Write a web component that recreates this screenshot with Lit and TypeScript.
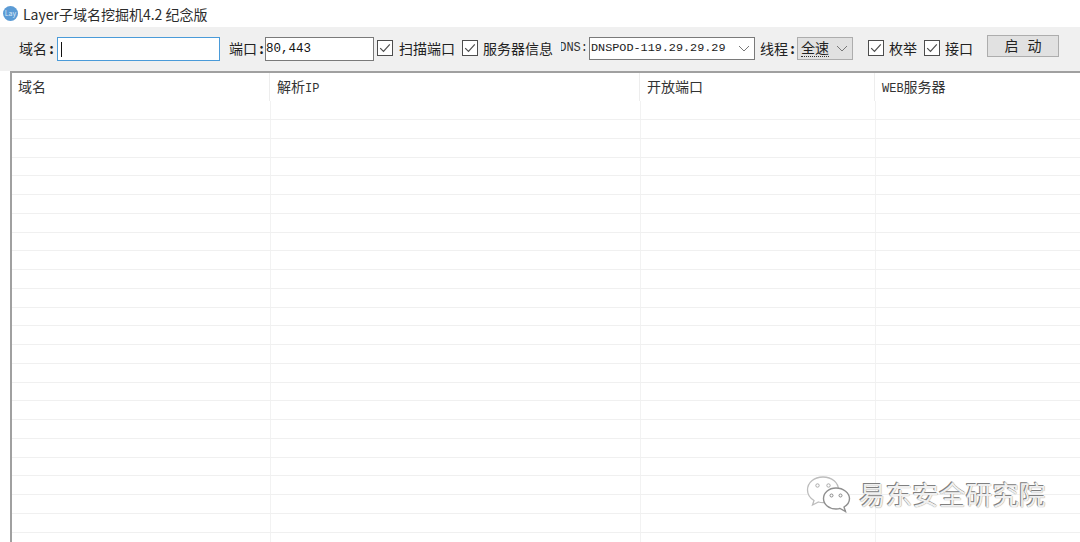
import { LitElement, html, css, svg } from "lit";
import { customElement } from "lit/decorators.js";

const check = html`<svg class="cb" width="16" height="16" viewBox="0 0 16 16">
  <rect x="0.5" y="0.5" width="15" height="15" fill="#fff" stroke="#4d4d4d"></rect>
  <path d="M3.2 8.2 L6.5 11.5 L12.8 4.4" fill="none" stroke="#4d4d4d" stroke-width="1.2"></path>
</svg>`;

const chev = html`<svg class="chev" width="12" height="7" viewBox="0 0 12 7"><path d="M1 1 L6 6 L11 1" fill="none" stroke="#777" stroke-width="1"></path></svg>`;

const bubble = svg`
  <path d="M17 2 C8 2 1.5 7.5 1.5 15 C1.5 19.5 4 23 8 25.5 L6.5 30 L12.5 27 C14 27.5 15.5 27.7 17 27.7 C27 27.7 32.5 22 32.5 15 C32.5 7.5 26 2 17 2 Z" fill="#fff" stroke="#bdbdbd" stroke-width="1.3"></path>
  <circle cx="11.5" cy="10.5" r="1.7" fill="#fff" stroke="#aaa"></circle>
  <circle cx="22.5" cy="10.5" r="1.7" fill="#fff" stroke="#aaa"></circle>
  <path d="M30 13 C22.5 13 17.5 18 17.5 23.5 C17.5 29.5 23 34 30 34 C31.5 34 33 33.8 34 33.4 L39.5 36.5 L38 32 C41.5 30 43.5 27 43.5 23.5 C43.5 18 37.5 13 30 13 Z" fill="#fff" stroke="#8f8f8f" stroke-width="1.4"></path>
  <circle cx="25.5" cy="20.5" r="1.5" fill="#fff" stroke="#888"></circle>
  <circle cx="34.5" cy="20.5" r="1.5" fill="#fff" stroke="#888"></circle>
`;

const colon = html`<span class="colon">:</span>`;

@customElement("app-root")
export class AppRoot extends LitElement {
  static styles = css`
    :host { display: block; width: 1080px; height: 542px; overflow: hidden; background: #fff; position: relative; font-family: "Noto Sans CJK SC", "Noto Sans", sans-serif; }
    .title { height: 27px; display: flex; align-items: center; background: #fff; padding-left: 3px; box-sizing: border-box; gap: 5px; font-size: 14px; color: #2b2b2b; }
    .logo { width: 15px; height: 15px; border-radius: 50%; background: #5b9bd5; color: #dbe8f5; font-size: 7px; line-height: 15px; text-align: center; flex: none; }
    .toolbar { height: 44px; background: #f0f0f0; display: flex; align-items: center; box-sizing: border-box; font-size: 14px; color: #222; }
    .toolbar > * { flex: none; }
    .lbl { white-space: nowrap; line-height: 20px; display: flex; margin-top: -3px; }
    .colon { width: 9px; text-align: center; font-weight: 700; }
    .input { height: 24px; box-sizing: border-box; background: #fff; display: flex; align-items: center; padding-left: 0; font-family: "Liberation Mono", monospace; font-size: 12.5px; color: #111; }
    .domain { width: 163px; border: 1.5px solid #4a9bd9; margin-left: 1px; }
    .caret { width: 1px; height: 15px; background: #111; margin-left: 3px; }
    .port { width: 109px; border: 1px solid #7a7a7a; margin-left: -1px; }
    .sel { height: 23px; box-sizing: border-box; display: flex; align-items: center; justify-content: space-between; padding: 0 4px 0 1px; margin-top: -2px; }
    .dns { width: 166px; background: #fff; border: 1px solid #7a7a7a; font-family: "Liberation Mono", monospace; font-size: 11.8px; white-space: nowrap; overflow: hidden; margin-left: 1px; }
    .speed { width: 56px; background: #e1e1e1; border: 1px solid #adadad; font-size: 14px; padding-left: 3px; }
    .speed span { line-height: 17px; border-bottom: 1px dotted #333; }
    .dnslbl { display: flex; justify-content: flex-end; width: 27px; overflow: hidden; white-space: nowrap; margin-left: 8px; margin-top: -3px; font-family: "Liberation Mono", monospace; font-size: 12px; color: #333; line-height: 20px; }
    .cb { flex: none; margin-top: -3px; }
    .ck { display: flex; }
    .btn { width: 72px; height: 22px; margin-left: 14px; margin-top: -6px; background: #e1e1e1; border: 1px solid #adadad; box-sizing: border-box; text-align: center; line-height: 19px; font-size: 14px; word-spacing: 6px; color: #222; }
    .chev { flex: none; }
    .table { margin-left: 10px; border-top: 2px solid #a0a0a0; border-left: 2px solid #a0a0a0; height: 471px; overflow: hidden; position: relative; box-sizing: border-box; }
    .row { display: grid; box-sizing: border-box; }
    .head { grid-template-columns: 257px 370px 235px 1fr; height: 28px; font-size: 14px; color: #333; }
    .head > div { padding: 2px 0 0 7px; line-height: 22px; border-left: 1px solid #ededed; box-sizing: border-box; }
    .head > div:first-child { border-left: 0; padding-left: 6px; }
    .m { font-family: "Liberation Mono", monospace; font-size: 12px; }
    .body { grid-template-columns: 258px 370px 235px 1fr; height: 18.75px; border-bottom: 1px solid #f0f0f0; }
    .first { height: 19px; }
    .body > div { border-left: 1px solid #f2f2f2; }
    .body > div:first-child { border-left: 0; }
    .wm { position: absolute; left: 806px; top: 474px; display: flex; align-items: center; gap: 8px; pointer-events: none; }
    .wmt { font-size: 26.7px; line-height: 40px; color: #f0f0f0; text-shadow: -1px -1px 0 #808080, 0 0 1px #777; white-space: nowrap; }
  `;

  render() {
    const rows = Array.from({ length: 23 });
    return html`
      <div class="title"><div class="logo">Lay</div><span>Layer子域名挖掘机4.2 纪念版</span></div>
      <div class="toolbar">
        <span class="lbl" style="margin-left:19px">域名${colon}</span>
        <div class="input domain"><div class="caret"></div></div>
        <span class="lbl" style="margin-left:9px">端口${colon}</span>
        <div class="input port">80,443</div>
        <span class="ck" style="margin-left:3px">${check}</span>
        <span class="lbl" style="margin-left:6px">扫描端口</span>
        <span class="ck" style="margin-left:7px">${check}</span>
        <span class="lbl" style="margin-left:5px">服务器信息</span>
        <span class="dnslbl"><span>DNS:</span></span>
        <div class="sel dns"><span>DNSPOD-119.29.29.29</span>${chev}</div>
        <span class="lbl" style="margin-left:5px">线程${colon}</span>
        <div class="sel speed"><span>全速</span>${chev}</div>
        <span class="ck" style="margin-left:15px">${check}</span>
        <span class="lbl" style="margin-left:5px">枚举</span>
        <span class="ck" style="margin-left:7px">${check}</span>
        <span class="lbl" style="margin-left:5px">接口</span>
        <div class="btn">启 动</div>
      </div>
      <div class="table">
        <div class="row head">
          <div>域名</div><div>解析<span class="m">IP</span></div><div>开放端口</div><div><span class="m">WEB</span>服务器</div>
        </div>
        <div class="row body first"><div></div><div></div><div></div><div></div></div>
        ${rows.map(() => html`<div class="row body"><div></div><div></div><div></div><div></div></div>`)}
      </div>
      <div class="wm">
        <svg width="45" height="38" viewBox="0 0 45 38">${bubble}</svg>
        <span class="wmt">易东安全研究院</span>
      </div>
    `;
  }
}
